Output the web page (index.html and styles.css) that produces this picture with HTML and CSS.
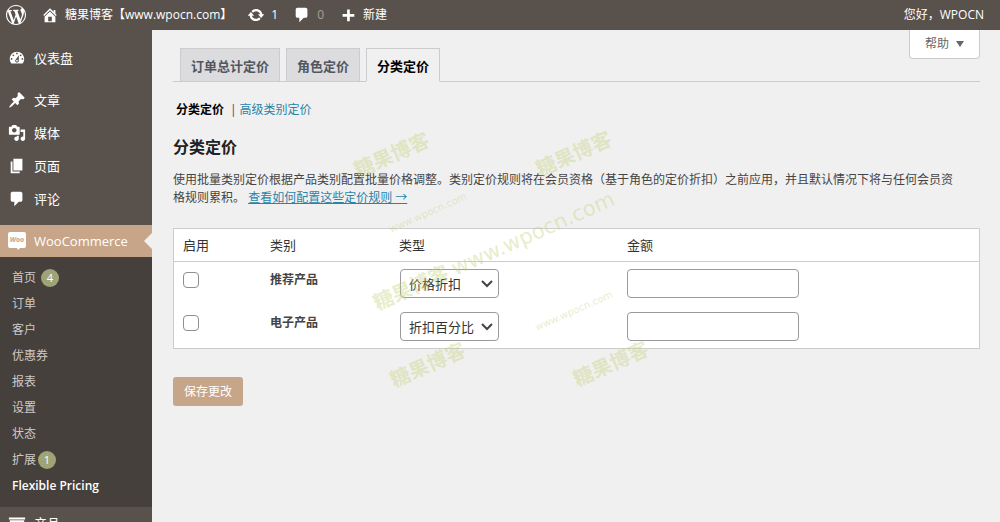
FILE: index.html
```html
<!DOCTYPE html>
<html lang="zh-CN">
<head>
<meta charset="utf-8">
<meta name="viewport" content="width=device-width, initial-scale=1">
<title>分类定价</title>
<link rel="stylesheet" href="styles.css">
</head>
<body>
<div class="page">
  <header class="adminbar">
    <a class="bar-item bar-logo" href="#" aria-label="WordPress"><svg class="icon-lg" viewBox="0 0 20 20"><path d="M20 10c0-5.51-4.49-10-10-10C4.48 0 0 4.49 0 10c0 5.52 4.48 10 10 10 5.51 0 10-4.48 10-10zM7.78 15.37L4.37 6.22c.55-.02 1.17-.08 1.17-.08.5-.06.44-1.13-.06-1.11 0 0-1.45.11-2.37.11-.18 0-.37 0-.58-.01C4.12 2.69 6.87 1.11 10 1.11c2.33 0 4.45.87 6.05 2.34-.68-.11-1.65.39-1.65 1.58 0 .74.45 1.36.9 2.1.35.61.55 1.36.55 2.46 0 1.49-1.4 5-1.4 5l-3.03-8.37c.54-.02.82-.17.82-.17.5-.05.44-1.25-.06-1.22 0 0-1.44.12-2.38.12-.87 0-2.33-.12-2.33-.12-.5-.03-.56 1.2-.06 1.22l.92.08 1.26 3.41zM17.41 10c.24-.64.74-1.87.43-4.25.7 1.29 1.05 2.71 1.05 4.25 0 3.29-1.73 6.24-4.4 7.78.97-2.59 1.94-5.2 2.92-7.78zM6.1 18.09C3.12 16.65 1.11 13.53 1.11 10c0-1.3.23-2.48.72-3.59C3.25 10.3 4.67 14.2 6.1 18.09zm4.03-6.63l2.58 6.98c-.86.29-1.76.45-2.71.45-.79 0-1.57-.11-2.29-.33.81-2.38 1.62-4.74 2.42-7.1z"/></svg></a>
    <a class="bar-item" href="#"><svg class="icon" viewBox="0 0 20 20"><path fill-rule="evenodd" d="M16 8.5l1.53 1.53-1.06 1.06L10 4.6l-6.47 6.49-1.06-1.06L10 2.5l4 4v-2h2v4zm-6-2.46l6 5.99V18H4v-5.97zM12 17v-5H8v5h4z"/></svg>糖果博客【www.wpocn.com】</a>
    <a class="bar-item" href="#"><svg class="icon" viewBox="0 0 20 20"><path d="M10.2 3.28c3.53 0 6.43 2.61 6.92 6h2.08l-3.5 4-3.5-4h2.32c-.45-1.97-2.21-3.45-4.32-3.45-1.45 0-2.73.71-3.54 1.78L4.95 5.66C6.23 4.2 8.11 3.28 10.2 3.28zm-.4 13.44c-3.52 0-6.43-2.61-6.92-6H.8l3.5-4c1.17 1.33 2.33 2.67 3.5 4H5.48c.45 1.97 2.21 3.45 4.32 3.45 1.45 0 2.73-.71 3.54-1.78l1.71 1.95c-1.28 1.46-3.15 2.38-5.25 2.38z"/></svg>1</a>
    <a class="bar-item" href="#"><svg class="icon" viewBox="0 0 20 20"><path d="M5 2h9c1.1 0 2 .9 2 2v7c0 1.1-.9 2-2 2h-2l-5 5v-5H5c-1.1 0-2-.9-2-2V4c0-1.1.9-2 2-2z"/></svg><span class="muted">0</span></a>
    <a class="bar-item" href="#"><svg class="icon" viewBox="0 0 20 20"><path d="M17 9v3h-5v5H9v-5H4V9h5V4h3v5h5z"/></svg>新建</a>
    <a class="bar-item bar-user" href="#">您好，WPOCN</a>
  </header>

  <div class="layout">
    <nav class="sidebar">
      <ul class="menu">
        <li><a class="menu-item" href="#"><svg class="icon" viewBox="0 0 20 20"><path fill-rule="evenodd" d="M3.76 16h12.48c1.1-1.37 1.76-3.11 1.76-5 0-4.42-3.58-8-8-8s-8 3.58-8 8c0 1.89.66 3.63 1.76 5zM10 4c.55 0 1 .45 1 1s-.45 1-1 1-1-.45-1-1 .45-1 1-1zM6 6c.55 0 1 .45 1 1s-.45 1-1 1-1-.45-1-1 .45-1 1-1zm8 0c.55 0 1 .45 1 1s-.45 1-1 1-1-.45-1-1 .45-1 1-1zm-5.37 5.55L12 7v6c0 1.1-.9 2-2 2s-2-.9-2-2c0-.57.24-1.08.63-1.45zM4 10c.55 0 1 .45 1 1s-.45 1-1 1-1-.45-1-1 .45-1 1-1zm12 0c.55 0 1 .45 1 1s-.45 1-1 1-1-.45-1-1 .45-1 1-1zm-5 3c0-.55-.45-1-1-1s-1 .45-1 1 .45 1 1 1 1-.45 1-1z"/></svg>仪表盘</a></li>
        <li class="separated"><a class="menu-item" href="#"><svg class="icon" viewBox="0 0 20 20"><path d="M10.44 3.02l1.82-1.82 6.36 6.35-1.83 1.82c-1.05-.68-2.48-.57-3.41.36l-.75.75c-.92.93-1.04 2.35-.35 3.41l-1.83 1.82-2.41-2.41-2.8 2.79c-.42.42-3.38 2.71-3.8 2.29s1.86-3.39 2.28-3.81l2.79-2.79L4.1 9.36l1.83-1.82c1.05.69 2.48.57 3.4-.36l.75-.75c.93-.92 1.05-2.35.36-3.41z"/></svg>文章</a></li>
        <li><a class="menu-item" href="#"><svg class="icon" viewBox="0 0 20 20"><path fill-rule="evenodd" d="M13 11V4c0-.55-.45-1-1-1h-1.67L9 1H5L3.67 3H2c-.55 0-1 .45-1 1v7c0 .55.45 1 1 1h10c.55 0 1-.45 1-1zM7 4.5c1.38 0 2.5 1.12 2.5 2.5S8.38 9.5 7 9.5 4.5 8.38 4.5 7 5.62 4.5 7 4.5zM14 6h5v10.5c0 1.38-1.12 2.5-2.5 2.5S14 17.88 14 16.5s1.12-2.5 2.5-2.5c.17 0 .34.02.5.05V9h-3V6zm-4 8.05V13h2v3.5c0 1.38-1.12 2.5-2.5 2.5S7 17.88 7 16.5 8.12 14 9.5 14c.17 0 .34.02.5.05z"/></svg>媒体</a></li>
        <li><a class="menu-item" href="#"><svg class="icon" viewBox="0 0 20 20"><path d="M6 15V2h10v13H6zm-1 1h8v2H3V5h2v11z"/></svg>页面</a></li>
        <li><a class="menu-item" href="#"><svg class="icon" viewBox="0 0 20 20"><path d="M5 2h9c1.1 0 2 .9 2 2v7c0 1.1-.9 2-2 2h-2l-5 5v-5H5c-1.1 0-2-.9-2-2V4c0-1.1.9-2 2-2z"/></svg>评论</a></li>
        <li class="separated">
          <a class="menu-item current" href="#"><svg class="icon" viewBox="0 0 18 18"><path d="M2 0h14a2 2 0 0 1 2 2v12a2 2 0 0 1-2 2h-4l-2 2-1-2H2a2 2 0 0 1-2-2V2a2 2 0 0 1 2-2z"/><text class="woo-text" x="9" y="10" text-anchor="middle">Woo</text></svg>WooCommerce</a>
          <ul class="submenu">
            <li><a class="sub-item" href="#">首页<span class="count spaced">4</span></a></li>
            <li><a class="sub-item" href="#">订单</a></li>
            <li><a class="sub-item" href="#">客户</a></li>
            <li><a class="sub-item" href="#">优惠券</a></li>
            <li><a class="sub-item" href="#">报表</a></li>
            <li><a class="sub-item" href="#">设置</a></li>
            <li><a class="sub-item" href="#">状态</a></li>
            <li><a class="sub-item" href="#">扩展<span class="count">1</span></a></li>
            <li><a class="sub-item active" href="#">Flexible Pricing</a></li>
          </ul>
        </li>
        <li class="flush"><a class="menu-item" href="#"><svg class="icon" viewBox="0 0 20 20"><path fill-rule="evenodd" d="M19 4v2H1V4h18zM2 7h16v10H2V7zm11 3V9H7v1h6z"/></svg>产品</a></li>
      </ul>
    </nav>

    <main class="content">
      <div class="content-head">
        <nav class="tabs">
          <a class="tab" href="#">订单总计定价</a>
          <a class="tab" href="#">角色定价</a>
          <a class="tab tab-active" href="#">分类定价</a>
        </nav>
        <button class="help" type="button">帮助<svg class="caret" viewBox="0 0 8 6"><path d="M0 0h8L4 6z"/></svg></button>
      </div>

      <div class="subnav"><a class="subnav-current" href="#">分类定价</a><span>|</span><a class="link" href="#">高级类别定价</a></div>

      <h2 class="title">分类定价</h2>
      <p class="intro">使用批量类别定价根据产品类别配置批量价格调整。类别定价规则将在会员资格（基于角色的定价折扣）之前应用，并且默认情况下将与任何会员资<br>格规则累积。 <a class="link underlined" href="#">查看如何配置这些定价规则 →</a></p>

      <form>
        <table class="pricing">
          <colgroup><col class="col-on"><col class="col-name"><col class="col-type"><col></colgroup>
          <thead>
            <tr><th>启用</th><th>类别</th><th>类型</th><th>金额</th></tr>
          </thead>
          <tbody>
            <tr>
              <td><input class="check" type="checkbox" id="on-1" aria-label="启用 推荐产品"></td>
              <td><label class="name" for="on-1">推荐产品</label></td>
              <td><span class="select-box"><select class="field select" aria-label="推荐产品 类型"><option>价格折扣</option><option>折扣百分比</option></select><svg class="chevron" viewBox="0 0 12 8"><path d="M1 1l5 5 5-5"/></svg></span></td>
              <td><input class="field amount" type="text" aria-label="推荐产品 金额"></td>
            </tr>
            <tr>
              <td><input class="check" type="checkbox" id="on-2" aria-label="启用 电子产品"></td>
              <td><label class="name" for="on-2">电子产品</label></td>
              <td><span class="select-box"><select class="field select" aria-label="电子产品 类型"><option>折扣百分比</option><option>价格折扣</option></select><svg class="chevron" viewBox="0 0 12 8"><path d="M1 1l5 5 5-5"/></svg></span></td>
              <td><input class="field amount" type="text" aria-label="电子产品 金额"></td>
            </tr>
          </tbody>
        </table>
        <button class="save" type="submit">保存更改</button>
      </form>
    </main>
  </div>

  <div class="marks" aria-hidden="true">
    <span class="mark m1">糖果博客</span>
    <span class="mark m2">糖果博客</span>
    <span class="mark m3">糖果博客 <span class="mark-url">www.wpocn.com</span></span>
    <span class="mark small m4">www.wpocn.com</span>
    <span class="mark small m5">www.wpocn.com</span>
    <span class="mark m6">糖果博客</span>
    <span class="mark m7">糖果博客</span>
  </div>
</div>
</body>
</html>
```
FILE: styles.css
```css
* { box-sizing: border-box; }

body {
  margin: 0;
  background: #f1f0f1;
  color: #444;
  font: 12px/18px "Open Sans", "Noto Sans CJK SC", sans-serif;
}

a { color: inherit; text-decoration: none; }
ul { list-style: none; margin: 0; padding: 0; }
svg { display: block; flex: none; fill: currentColor; }
button, input, select { font: inherit; color: inherit; }

.page {
  position: relative;
  display: flex;
  flex-direction: column;
  height: 100vh;
  overflow: hidden;
}

.icon { width: 18px; height: 18px; }
.icon-lg { width: 20px; height: 20px; }

/* Top bar */
.adminbar {
  display: flex;
  align-items: center;
  gap: 15px;
  height: 30px;
  flex: none;
  padding: 0 16px 0 6px;
  background: #59524c;
  color: #fff;
}
.bar-item { display: flex; align-items: center; gap: 6px; }
.bar-user { margin-left: auto; }
.muted { color: #a5a09c; }

/* Side menu */
.layout { display: flex; flex: 1; min-height: 0; }
.sidebar {
  width: 152px;
  flex: none;
  background: #59524c;
  color: #fff;
}
.menu { padding-top: 12px; }
.menu > li + li { margin-top: 1px; }
.menu > li.separated { margin-top: 10px; }
.menu > li.flush { margin-top: 0; }
.menu-item {
  position: relative;
  display: flex;
  align-items: center;
  gap: 8px;
  height: 32px;
  padding-left: 8px;
  font-size: 13px;
}
.current { background: #c7a589; }
.current::after {
  content: "";
  position: absolute;
  right: 0;
  top: 8px;
  border: 8px solid transparent;
  border-left-width: 0;
  border-right-color: #f1f0f1;
}
.woo-text { fill: #c7a589; font: italic bold 7px "Open Sans", sans-serif; }
.submenu { padding: 8px 0; background: #46403c; }
.sub-item {
  display: flex;
  align-items: center;
  height: 26px;
  padding-left: 12px;
  color: #cdcbc9;
}
.active { color: #fff; font-weight: 600; }
.count {
  width: 18px;
  height: 18px;
  margin-left: 2px;
  border-radius: 50%;
  background: #9ea476;
  color: #fff;
  font-size: 11px;
  text-align: center;
}
.spaced { margin-left: 5px; }

/* Content */
.content { flex: 1; min-width: 0; padding: 0 20px 0 21px; }
.content-head {
  display: flex;
  justify-content: space-between;
  align-items: flex-start;
  height: 52px;
  border-bottom: 1px solid #ccc;
}
.tabs {
  display: flex;
  align-self: flex-end;
  gap: 6px;
  margin-bottom: -1px;
  padding-left: 7px;
}
.tab {
  height: 34px;
  padding: 0 10px;
  border: 1px solid #ccc;
  background: #dcdcde;
  color: #50575e;
  font-size: 13px;
  font-weight: 700;
  line-height: 34px;
}
.tab-active {
  border-bottom-color: #f1f0f1;
  background: #f1f0f1;
  color: #000;
}
.help {
  display: flex;
  align-items: center;
  gap: 7px;
  height: 29px;
  padding: 0 15px;
  border: 1px solid #ccc;
  border-top: 0;
  border-radius: 0 0 4px 4px;
  background: #fff;
  color: #666;
}
.caret { width: 8px; height: 6px; }

.subnav { display: flex; gap: 3px; margin-top: 19px; padding-left: 3px; }
.subnav-current { margin-right: 3px; color: #000; font-weight: 700; }
.link { color: #2a83a8; }
.underlined { text-decoration: underline; }
.title {
  margin: 16px 0 12px;
  color: #222;
  font-size: 16px;
  line-height: 24px;
}
.intro { margin: 0 0 21px; }

.pricing {
  width: 100%;
  table-layout: fixed;
  border: 1px solid #ccc;
  border-spacing: 0;
  background: #fff;
}
.col-on { width: 87px; }
.col-name { width: 129px; }
.col-type { width: 228px; }
.pricing th {
  height: 33px;
  padding: 0 9px;
  border-bottom: 1px solid #ccc;
  color: #333;
  font-size: 13px;
  font-weight: 400;
  text-align: left;
}
.pricing td { height: 43px; padding: 7px 9px; vertical-align: top; }
.check {
  appearance: none;
  display: block;
  width: 16px;
  height: 16px;
  margin: 3px 0 0;
  border: 1px solid #8d8f94;
  border-radius: 4px;
  background: #fff;
}
.check:checked { background: #c7a589; }
.name { display: block; line-height: 22px; font-weight: 700; }
.field {
  display: block;
  height: 29px;
  border: 1px solid #999a9e;
  border-radius: 4px;
  background: #fff;
  color: #333;
  font-size: 13px;
}
.select-box { display: grid; width: 100px; padding-left: 1px; align-items: center; }
.select { grid-area: 1 / 1; appearance: none; padding: 0 8px; }
.chevron {
  grid-area: 1 / 1;
  justify-self: end;
  width: 12px;
  height: 8px;
  margin-right: 6px;
  fill: none;
  stroke: #444;
  stroke-width: 2;
  pointer-events: none;
}
.amount { width: 172px; padding: 0 8px; }
.save {
  height: 29px;
  margin-top: 28px;
  padding: 0 11px;
  border: 0;
  border-radius: 3px;
  background: #c7a589;
  color: #fff;
}

/* Diagonal site marks laid over the page */
.marks { position: absolute; inset: 0; overflow: hidden; pointer-events: none; }
.mark {
  position: absolute;
  transform: translate(-50%, -50%) rotate(-24deg);
  color: rgba(196, 208, 120, 0.4);
  font-size: 20px;
  font-weight: 700;
  line-height: 24px;
  white-space: nowrap;
}
.mark-url { font: 21px/24px "DejaVu Sans", sans-serif; }
.small { font: 10px/14px "DejaVu Sans", sans-serif; }
.m1 { left: 392px; top: 155px; }
.m2 { left: 574px; top: 154px; }
.m3 { left: 494px; top: 251px; }
.m4 { left: 428px; top: 213px; }
.m5 { left: 574px; top: 311px; }
.m6 { left: 428px; top: 365px; }
.m7 { left: 611px; top: 364px; }
```
